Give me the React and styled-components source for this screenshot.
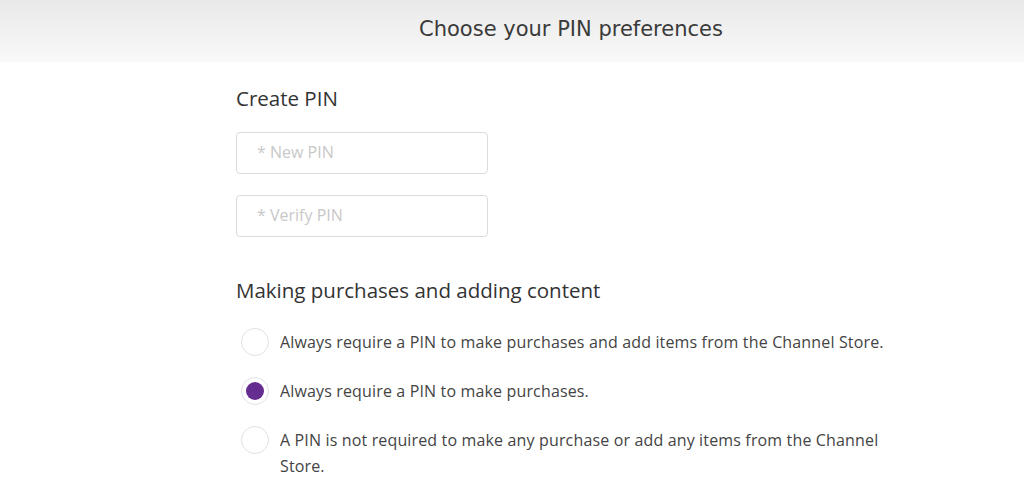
import React from "react";
import styled, { createGlobalStyle } from "styled-components";

const Global = createGlobalStyle`
  html, body { margin: 0; padding: 0; background: #fff; }
  body { font-family: "Open Sans", "Liberation Sans", sans-serif; color: #333; }
  * { box-sizing: border-box; }
`;

const Header = styled.header`
  height: 62px;
  background: linear-gradient(#e9e9e9, #f9f9f9);
  display: flex;
  align-items: center;
`;

const HeaderInner = styled.div`
  margin-left: 236px;
  width: 670px;
  text-align: center;
`;

const Title = styled.h1`
  margin: 0;
  font-family: "DejaVu Sans", sans-serif;
  font-weight: normal;
  font-size: 21px;
  line-height: 26px;
  color: #3a3a3a;
  padding-bottom: 4px;
`;

const Main = styled.main`
  margin-left: 236px;
  width: 670px;
  padding-top: 23px;
`;

const SectionTitle = styled.h2`
  margin: 0;
  font-weight: normal;
  font-size: 20.5px;
  line-height: 26px;
  color: #333;
`;

const Fields = styled.div`
  display: flex;
  flex-direction: column;
  gap: 21px;
  margin-top: 21px;
`;

const Input = styled.input`
  width: 252px;
  height: 42px;
  border: 1px solid #dcdcdc;
  border-radius: 4px;
  padding: 0 20px 3px;
  font-family: inherit;
  font-size: 16px;
  color: #333;
  outline: none;
  &::placeholder { color: #c8c8c8; }
`;

const Section2 = styled.div`
  margin-top: 40px;
`;

const Options = styled.div`
  display: flex;
  flex-direction: column;
  gap: 22px;
  margin-top: 26px;
`;

const Option = styled.label`
  display: flex;
  align-items: flex-start;
  gap: 11px;
  padding-left: 5px;
  font-size: 16px;
  letter-spacing: 0.15px;
  line-height: 26px;
  color: #444;
  cursor: pointer;
`;

const Radio = styled.span`
  flex: none;
  width: 28px;
  height: 28px;
  margin-top: -1px;
  border-radius: 50%;
  border: 1px solid #e2e2e2;
  background: #fff;
  display: flex;
  align-items: center;
  justify-content: center;
  &::after {
    content: "";
    width: 18px;
    height: 18px;
    border-radius: 50%;
    background: ${(p) => (p.$checked ? "#662d91" : "transparent")};
  }
`;

const OptText = styled.span`
  max-width: 612px;
`;

const options = [
  "Always require a PIN to make purchases and add items from the Channel Store.",
  "Always require a PIN to make purchases.",
  "A PIN is not required to make any purchase or add any items from the Channel Store.",
];

export default function App() {
  const [sel, setSel] = React.useState(1);
  return (
    <>
      <Global />
      <Header>
        <HeaderInner>
          <Title>Choose your PIN preferences</Title>
        </HeaderInner>
      </Header>
      <Main>
        <SectionTitle>Create PIN</SectionTitle>
        <Fields>
          <Input type="password" placeholder="* New PIN" />
          <Input type="password" placeholder="* Verify PIN" />
        </Fields>
        <Section2>
          <SectionTitle>Making purchases and adding content</SectionTitle>
          <Options>
            {options.map((t, i) => (
              <Option key={i} onClick={() => setSel(i)}>
                <Radio $checked={sel === i} />
                <OptText>{t}</OptText>
              </Option>
            ))}
          </Options>
        </Section2>
      </Main>
    </>
  );
}
